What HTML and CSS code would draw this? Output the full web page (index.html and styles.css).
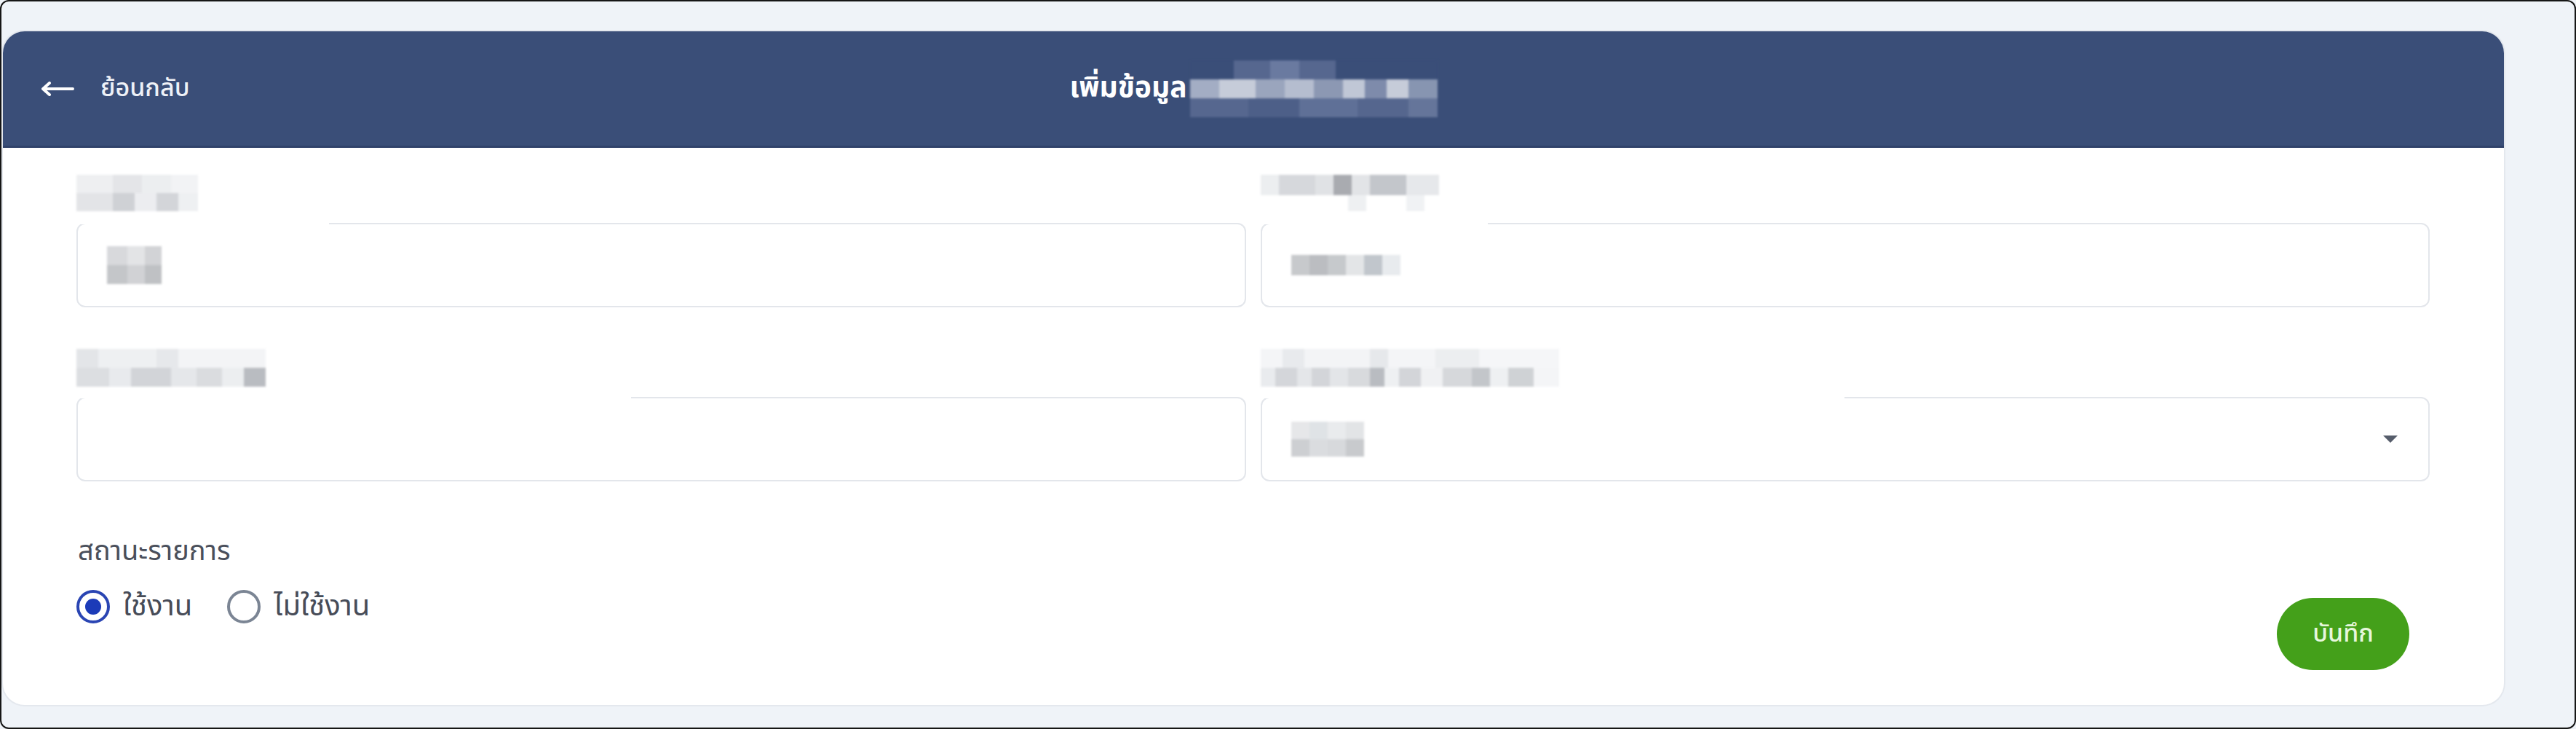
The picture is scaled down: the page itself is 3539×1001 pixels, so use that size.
FILE: index.html
```html
<!DOCTYPE html>
<html lang="th">
<head>
<meta charset="utf-8">
<title>เพิ่มข้อมูล</title>
<link rel="stylesheet" href="styles.css">
</head>
<body>
<div class="frame">
  <section class="card">
    <header class="header">
      <a class="back" href="#">
        <svg class="back-icon" viewBox="0 0 46 20" width="46" height="20" aria-hidden="true">
          <path d="M44 10H4M12 2L3 10L12 18" fill="none" stroke="#ffffff" stroke-width="4" stroke-linecap="round" stroke-linejoin="round"/>
        </svg>
        <span class="back-text">ย้อนกลับ</span>
      </a>
      <h1 class="title"><span>เพิ่มข้อมูล</span><span class="mz mz-title" aria-hidden="true"></span></h1>
      <div class="spacer"></div>
    </header>

    <form class="body">
      <div class="grid">
        <div class="field">
          <div class="label"><span class="mz mz-l1" aria-hidden="true"></span></div>
          <fieldset class="box">
            <legend class="notch n1"></legend>
            <div class="box-inner"><span class="mz mz-v1" aria-hidden="true"></span></div>
          </fieldset>
        </div>
        <div class="field">
          <div class="label"><span class="mz mz-l2" aria-hidden="true"></span></div>
          <fieldset class="box">
            <legend class="notch n2"></legend>
            <div class="box-inner"><span class="mz mz-v2" aria-hidden="true"></span></div>
          </fieldset>
        </div>
        <div class="field">
          <div class="label"><span class="mz mz-l3" aria-hidden="true"></span></div>
          <fieldset class="box">
            <legend class="notch n3"></legend>
            <div class="box-inner"></div>
          </fieldset>
        </div>
        <div class="field">
          <div class="label"><span class="mz mz-l4" aria-hidden="true"></span></div>
          <fieldset class="box">
            <legend class="notch n4"></legend>
            <div class="box-inner select">
              <span class="mz mz-v4" aria-hidden="true"></span>
              <span class="caret" aria-hidden="true"></span>
            </div>
          </fieldset>
        </div>
      </div>

      <div class="footer">
        <div class="status">
          <div class="status-label">สถานะรายการ</div>
          <div class="radios">
            <label class="radio checked"><span class="dot"></span><span>ใช้งาน</span></label>
            <label class="radio"><span class="dot"></span><span>ไม่ใช้งาน</span></label>
          </div>
        </div>
        <button type="button" class="save">บันทึก</button>
      </div>
    </form>
  </section>
</div>
</body>
</html>
```

FILE: styles.css
```css
* { box-sizing: border-box; }

html, body {
  margin: 0;
  padding: 0;
}

body {
  background: #eff3f8;
  font-family: "Noto Sans Thai", "Noto Sans", "Liberation Sans", sans-serif;
  color: #3f4450;
}

.frame {
  width: 3539px;
  height: 1001px;
  border: 2px solid #161616;
  border-radius: 12px;
  background: #eff3f8;
  padding: 41px 97px 0 2px;
}

.card {
  height: 925px;
  background: #ffffff;
  border-radius: 30px;
  box-shadow: 0 0 0 2px #e4e8ee;
  overflow: hidden;
  display: flex;
  flex-direction: column;
}

/* ---------- header ---------- */
.header {
  height: 160px;
  flex: none;
  background: #3a4e78;
  border-bottom: 3px solid #30426a;
  display: grid;
  grid-template-columns: 1fr auto 1fr;
  align-items: center;
  padding: 0 52px;
}

.back {
  display: flex;
  align-items: center;
  gap: 36px;
  color: #eef1f7;
  text-decoration: none;
  justify-self: start;
}

.back-icon { display: block; }

.back-text {
  font-size: 34px;
  font-weight: 500;
}

.title {
  margin: 0;
  display: flex;
  align-items: center;
  color: #ffffff;
  font-size: 39px;
  font-weight: 700;
}

/* ---------- mosaic (pixelated/blurred content) ---------- */
.mz {
  display: inline-block;
  flex: none;
  filter: blur(1.5px);
}

.mz-title {
  width: 340px;
  height: 78px;
  margin-left: 4px;
  background:
    linear-gradient(90deg, #3a4e78 0 60px, #56678f 60px 110px, #6a7aa0 110px 150px, #56678f 150px 200px, #3a4e78 200px 340px) top / 100% 26px no-repeat,
    linear-gradient(90deg, #a3adc4 0 40px, #c6ccd9 40px 90px, #9aa5bd 90px 130px, #b5bdcf 130px 170px, #8c98b3 170px 210px, #c0c7d6 210px 240px, #7e8bab 240px 270px, #c6ccd9 270px 300px, #8795b1 300px 340px) center / 100% 26px no-repeat,
    linear-gradient(90deg, #56678f 0 80px, #4d5f88 80px 150px, #5f7097 150px 230px, #55668e 230px 300px, #65759a 300px 340px) bottom / 100% 26px no-repeat;
}

.mz-l1 {
  width: 167px;
  height: 50px;
  background:
    linear-gradient(90deg, #eeeff1 0 50px, #e4e5e8 50px 90px, #eceef0 90px 130px, #f2f3f5 130px 167px) top / 100% 25px no-repeat,
    linear-gradient(90deg, #e3e4e7 0 50px, #cfd1d5 50px 80px, #ecedf0 80px 110px, #d3d5d9 110px 140px, #eef0f2 140px 167px) bottom / 100% 25px no-repeat;
}

.mz-l2 {
  width: 245px;
  height: 50px;
  background:
    linear-gradient(90deg, #eceef0 0 25px, #d6d8dc 25px 75px, #e0e2e5 75px 100px, #a9abb0 100px 125px, #e2e4e7 125px 150px, #c3c6cb 150px 200px, #e6e8eb 200px 245px) top / 100% 28px no-repeat,
    linear-gradient(90deg, #ffffff 0 120px, #eef0f2 120px 145px, #ffffff 145px 200px, #f0f2f4 200px 225px, #ffffff 225px 245px) bottom / 100% 22px no-repeat;
}

.mz-l3 {
  width: 260px;
  height: 52px;
  background:
    linear-gradient(90deg, #e3e5e8 0 30px, #eef0f2 30px 110px, #e6e8eb 110px 140px, #f3f4f6 140px 260px) top / 100% 26px no-repeat,
    linear-gradient(90deg, #dcdee1 0 45px, #e8eaed 45px 75px, #d2d4d8 75px 130px, #e5e7ea 130px 165px, #dadcdf 165px 200px, #eceef0 200px 230px, #b9bcc1 230px 260px) bottom / 100% 26px no-repeat;
}

.mz-l4 {
  width: 410px;
  height: 52px;
  background:
    linear-gradient(90deg, #f4f5f7 0 30px, #e8eaed 30px 60px, #f3f4f6 60px 150px, #e6e8eb 150px 175px, #f4f5f7 175px 240px, #eceef0 240px 300px, #f5f6f8 300px 410px) top / 100% 26px no-repeat,
    linear-gradient(90deg, #e9ebee 0 20px, #d4d6da 20px 50px, #e4e6e9 50px 70px, #d3d5d9 70px 95px, #e3e5e8 95px 120px, #d8dadd 120px 150px, #b9bcc1 150px 170px, #eef0f2 170px 190px, #d3d5d9 190px 220px, #f0f1f3 220px 250px, #d6d8db 250px 290px, #c3c6ca 290px 315px, #eef0f2 315px 340px, #cfd2d5 340px 375px, #f4f5f7 375px 410px) bottom / 100% 26px no-repeat;
}

.mz-v1 {
  width: 75px;
  height: 52px;
  background:
    linear-gradient(90deg, #d8d9dc 0 28px, #e3e4e6 28px 52px, #d2d3d6 52px 75px) top / 100% 26px no-repeat,
    linear-gradient(90deg, #c4c6c9 0 28px, #d1d2d5 28px 52px, #bfc1c4 52px 75px) bottom / 100% 26px no-repeat;
}

.mz-v2 {
  width: 150px;
  height: 28px;
  background: linear-gradient(90deg, #c7c9cc 0 25px, #bbbdc1 25px 50px, #c6c9cc 50px 75px, #e3e5e7 75px 100px, #c1c6cc 100px 125px, #e8ebee 125px 150px);
}

.mz-v4 {
  width: 100px;
  height: 48px;
  background:
    linear-gradient(90deg, #e6e7e9 0 25px, #dfe3e6 25px 50px, #e9ebed 50px 75px, #e2e4e6 75px 100px) top / 100% 24px no-repeat,
    linear-gradient(90deg, #cdcfd2 0 25px, #dadcdf 25px 50px, #d7d9dc 50px 75px, #c8cacd 75px 100px) bottom / 100% 24px no-repeat;
}

/* ---------- form body ---------- */
.body {
  flex: 1;
  display: flex;
  flex-direction: column;
  padding: 37px 102px 0 101px;
}

.grid {
  display: grid;
  grid-template-columns: 1fr 1fr;
  column-gap: 20px;
  row-gap: 57px;
}

.field {
  display: flex;
  flex-direction: column;
  min-width: 0;
}

.label {
  height: 66px;
}

.box {
  margin: 0;
  padding: 0;
  min-width: 0;
  height: 116px;
  border: 2px solid #e3e6eb;
  border-radius: 12px;
}

.notch {
  padding: 0;
  height: 0;
  line-height: 0;
  font-size: 0;
  margin: 0;
}

.n1 { width: 345px; }
.n2 { width: 310px; }
.n3 { width: 760px; }
.n4 { width: 800px; }

.box-inner {
  height: 112px;
  display: flex;
  align-items: center;
  padding: 0 40px;
}

.select {
  justify-content: space-between;
  padding-right: 42px;
}

.caret {
  width: 0;
  height: 0;
  border-left: 10px solid transparent;
  border-right: 10px solid transparent;
  border-top: 10px solid #565d6b;
}

/* ---------- footer ---------- */
.footer {
  display: flex;
  justify-content: space-between;
  align-items: flex-start;
  margin-top: 72px;
  padding-right: 28px;
}

.status-label {
  font-size: 38px;
  line-height: 50px;
  color: #4a4f5b;
  padding-left: 2px;
}

.radios {
  display: flex;
  gap: 48px;
  margin-top: 24px;
}

.radio {
  display: flex;
  align-items: center;
  gap: 18px;
  font-size: 40px;
  color: #474c58;
  line-height: 52px;
}

.dot {
  width: 46px;
  height: 46px;
  border-radius: 50%;
  border: 4px solid #7b8594;
  display: flex;
  align-items: center;
  justify-content: center;
  background: #fff;
}

.radio.checked .dot {
  border-color: #2a45b3;
}

.radio.checked .dot::after {
  content: "";
  width: 22px;
  height: 22px;
  border-radius: 50%;
  background: #1c3bb8;
}

.save {
  margin-top: 88px;
  width: 182px;
  height: 99px;
  border: none;
  border-radius: 50px;
  background: #44a01a;
  color: #e6f7dc;
  font-family: inherit;
  font-size: 34px;
  font-weight: 500;
}
```
